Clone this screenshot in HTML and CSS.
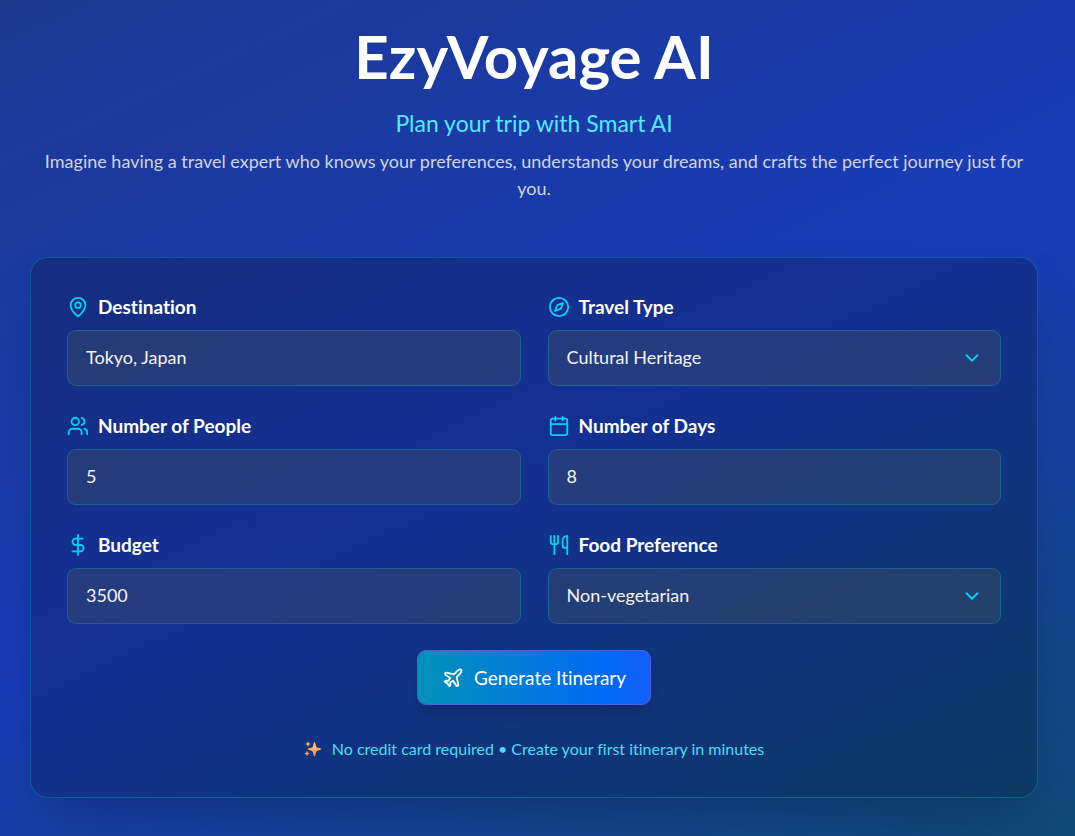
FILE: index.html
```html
<!DOCTYPE html>
<html lang="en">
<head>
<meta charset="utf-8">
<meta name="viewport" content="width=device-width, initial-scale=1">
<title>EzyVoyage AI</title>
<link rel="stylesheet" href="styles.css">
</head>
<body>
<main class="page">
  <header class="hero">
    <h1 class="title">EzyVoyage AI</h1>
    <p class="tagline">Plan your trip with Smart AI</p>
    <p class="intro">Imagine having a travel expert who knows your preferences, understands your dreams, and crafts the perfect journey just for you.</p>
  </header>
  <form class="card">
    <div class="fields">
      <div class="field">
        <label class="label" for="destination"><svg class="icon" viewBox="0 0 24 24"><path d="M20 10c0 4.993-5.539 10.193-7.399 11.799a1 1 0 0 1-1.202 0C9.539 20.193 4 14.993 4 10a8 8 0 0 1 16 0"/><circle cx="12" cy="10" r="3"/></svg>Destination</label>
        <input class="control" id="destination" type="text" value="Tokyo, Japan">
      </div>
      <div class="field">
        <label class="label" for="type"><svg class="icon" viewBox="0 0 24 24"><circle cx="12" cy="12" r="10"/><path d="m16.24 7.76-1.804 5.411a2 2 0 0 1-1.265 1.265L7.76 16.24l1.804-5.411a2 2 0 0 1 1.265-1.265z"/></svg>Travel Type</label>
        <div class="select-wrap">
          <select class="control" id="type"><option>Cultural Heritage</option></select>
          <svg class="chevron" viewBox="0 0 24 24"><path d="m6 9 6 6 6-6"/></svg>
        </div>
      </div>
      <div class="field">
        <label class="label" for="people"><svg class="icon" viewBox="0 0 24 24"><path d="M16 21v-2a4 4 0 0 0-4-4H6a4 4 0 0 0-4 4v2"/><circle cx="9" cy="7" r="4"/><path d="M22 21v-2a4 4 0 0 0-3-3.87M16 3.13a4 4 0 0 1 0 7.75"/></svg>Number of People</label>
        <input class="control" id="people" type="text" inputmode="numeric" value="5">
      </div>
      <div class="field">
        <label class="label" for="days"><svg class="icon" viewBox="0 0 24 24"><path d="M8 2v4M16 2v4M3 10h18"/><rect x="3" y="4" width="18" height="18" rx="2"/></svg>Number of Days</label>
        <input class="control" id="days" type="text" inputmode="numeric" value="8">
      </div>
      <div class="field">
        <label class="label" for="budget"><svg class="icon" viewBox="0 0 24 24"><path d="M12 1v22M17 5H9.500a3.500 3.500 0 0 0 0 7h5a3.500 3.500 0 0 1 0 7H6"/></svg>Budget</label>
        <input class="control" id="budget" type="text" inputmode="numeric" value="3500">
      </div>
      <div class="field">
        <label class="label" for="food"><svg class="icon" viewBox="0 0 24 24"><path d="M3 2v7c0 1.100.9 2 2 2h4a2 2 0 0 0 2-2V2M7 2v20M21 15V2a5 5 0 0 0-5 5v6c0 1.100.9 2 2 2h3Zm0 0v7"/></svg>Food Preference</label>
        <div class="select-wrap">
          <select class="control" id="food"><option>Non-vegetarian</option></select>
          <svg class="chevron" viewBox="0 0 24 24"><path d="m6 9 6 6 6-6"/></svg>
        </div>
      </div>
    </div>
    <button class="submit" type="submit"><svg class="icon icon-light" viewBox="0 0 24 24"><path d="M17.800 19.200 16 11l3.500-3.500C21 6 21.500 4 21 3c-1-.5-3 0-4.500 1.500L13 8 4.800 6.200c-.5-.1-.9.1-1.100.5l-.3.5c-.2.5-.1 1 .3 1.300L9 12l-2 3H4l-1 1 3 2 2 3 1-1v-3l3-2 3.500 5.300c.3.4.8.5 1.300.3l.5-.2c.4-.3.6-.7.5-1.200z"/></svg>Generate Itinerary</button>
    <p class="note">
      <svg class="sparkle" viewBox="0 0 18 18"><defs><linearGradient id="gold" x1="0" y1="0" x2="0" y2="1"><stop offset="0" stop-color="#ffd35a"/><stop offset="1" stop-color="#ff8a5c"/></linearGradient></defs><path fill="url(#gold)" d="M10.500 2c.6 0 .8 1 1.200 3 .4 2 1.200 2.700 3.300 3.100 1.500.3 2.300.5 2.300 1s-.8.8-2.300 1.100c-2.100.4-2.900 1.200-3.300 3.200-.4 2-.6 3-1.200 3s-.8-1-1.200-3c-.4-2-1.200-2.800-3.300-3.200-1.500-.3-2.300-.5-2.300-1.100s.8-.7 2.300-1c2.100-.4 2.900-1.100 3.300-3.100.4-2 .6-3 1.200-3Z"/><path fill="#ffc552" d="m4 1 .8 2.200L7 4l-2.200.8L4 7l-.8-2.200L1 4l2.200-.8Z"/><path fill="#ff9a6b" d="m3 10.500.8 2.200 2.200.8-2.200.8L3 16.500l-.8-2.200-2.200-.8 2.200-.8Z"/></svg>
      <span>No credit card required • Create your first itinerary in minutes</span>
    </p>
  </form>
</main>
</body>
</html>
```
FILE: styles.css
```css
*, *::before, *::after { box-sizing: border-box; }

body {
  margin: 0;
  min-height: 100vh;
  font-family: Lato, "Open Sans", sans-serif;
  font-size: 18px;
  line-height: 27px;
  font-variant-ligatures: none;
  color: #fff;
  background: linear-gradient(155deg, #1c398e 0%, #1c3998 8%, #193cb8 52%, #0e4a78 100%);
}

h1, p { margin: 0; }

.page { padding: 22px 37px 38px 30px; }

.hero { text-align: center; }

.title {
  font-size: 60px;
  line-height: 68px;
  font-weight: 700;
}

.tagline {
  margin-top: 15px;
  font-size: 23px;
  line-height: 36px;
  color: #53eafd;
}

.intro {
  margin-top: 7px;
  color: #d1d5dc;
}

.card {
  display: flex;
  flex-direction: column;
  align-items: center;
  margin-top: 55px;
  padding: 35px 36px;
  border: 1px solid rgba(0, 184, 219, 0.3);
  border-radius: 18px;
  background: rgba(0, 0, 0, 0.2);
  box-shadow: 0 28px 56px -14px rgba(0, 0, 0, 0.25);
}

.fields {
  align-self: stretch;
  display: grid;
  grid-template-columns: 1fr 1fr;
  gap: 26px 27px;
}

.field {
  display: flex;
  flex-direction: column;
  gap: 10px;
  min-width: 0;
}

.label {
  display: flex;
  align-items: center;
  gap: 9px;
  font-size: 19px;
  font-weight: 700;
}

.icon {
  width: 22px;
  height: 22px;
  flex: none;
  fill: none;
  stroke: #00d3f2;
  stroke-width: 2;
  stroke-linecap: round;
  stroke-linejoin: round;
}

.icon-light { stroke: #fff; }

.control {
  display: block;
  width: 100%;
  height: 56px;
  margin: 0;
  padding: 0 18px 2px;
  border: 1px solid rgba(0, 184, 219, 0.3);
  border-radius: 9px;
  background: rgba(84, 89, 86, 0.3);
  color: #f3f4f6;
  font: inherit;
  appearance: none;
}

.select-wrap { position: relative; }

.chevron {
  position: absolute;
  top: 17px;
  right: 18px;
  width: 22px;
  height: 22px;
  fill: none;
  stroke: #00d3f2;
  stroke-width: 2;
  stroke-linecap: round;
  stroke-linejoin: round;
  pointer-events: none;
}

.submit {
  display: flex;
  align-items: center;
  gap: 10px;
  height: 55px;
  margin-top: 26px;
  padding: 0 24px;
  border: 1px solid #4f5fe0;
  border-radius: 9px;
  background: linear-gradient(90deg, #0092b8, #0068f5 82%, #155dfc) border-box;
  box-shadow: 0 10px 16px -4px rgba(0, 0, 0, 0.2);
  color: #fff;
  font: inherit;
  font-size: 19px;
}

.note {
  display: flex;
  align-items: center;
  gap: 10px;
  margin-top: 30px;
  font-size: 16px;
  color: #4fdcf2;
}

.sparkle {
  width: 18px;
  height: 18px;
}
```
